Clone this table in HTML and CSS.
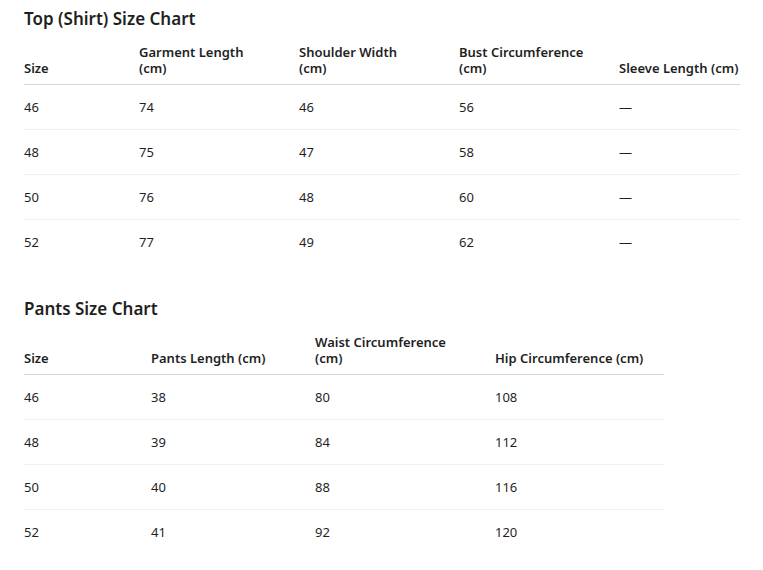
FILE: index.html
```html
<!DOCTYPE html>
<html>
<head>
<meta charset="utf-8">
<link rel="stylesheet" href="styles.css">
</head>
<body>
<div class="page">
  <section class="chart">
    <h2 class="title">Top (Shirt) Size Chart</h2>
    <table class="tbl tbl-top">
      <colgroup>
        <col class="c-size"><col class="c-a"><col class="c-b"><col class="c-c"><col class="c-d">
      </colgroup>
      <thead>
        <tr><th>Size</th><th>Garment Length<br>(cm)</th><th>Shoulder Width<br>(cm)</th><th>Bust Circumference<br>(cm)</th><th>Sleeve Length (cm)</th></tr>
      </thead>
      <tbody>
        <tr><td>46</td><td>74</td><td>46</td><td>56</td><td>—</td></tr>
        <tr><td>48</td><td>75</td><td>47</td><td>58</td><td>—</td></tr>
        <tr><td>50</td><td>76</td><td>48</td><td>60</td><td>—</td></tr>
        <tr><td>52</td><td>77</td><td>49</td><td>62</td><td>—</td></tr>
      </tbody>
    </table>
  </section>
  <section class="chart">
    <h2 class="title">Pants Size Chart</h2>
    <table class="tbl tbl-pants">
      <colgroup>
        <col class="p-size"><col class="p-a"><col class="p-b"><col class="p-c">
      </colgroup>
      <thead>
        <tr><th>Size</th><th>Pants Length (cm)</th><th>Waist Circumference<br>(cm)</th><th>Hip Circumference (cm)</th></tr>
      </thead>
      <tbody>
        <tr><td>46</td><td>38</td><td>80</td><td>108</td></tr>
        <tr><td>48</td><td>39</td><td>84</td><td>112</td></tr>
        <tr><td>50</td><td>40</td><td>88</td><td>116</td></tr>
        <tr><td>52</td><td>41</td><td>92</td><td>120</td></tr>
      </tbody>
    </table>
  </section>
</div>
</body>
</html>
```

FILE: styles.css
```css
html, body {
  margin: 0;
  padding: 0;
  background: #ffffff;
}
body {
  font-family: "Segoe UI", "Noto Sans", "Open Sans", sans-serif;
  color: #1f1f1f;
  font-size: 13px;
}
.page {
  padding: 7px 23px 0 24px;
}
.chart {
  height: 290px;
}
.title {
  margin: 0;
  font-size: 17px;
  font-weight: 600;
  line-height: 24px;
  color: #1f1f1f;
}
.tbl {
  border-collapse: collapse;
  table-layout: fixed;
  margin-top: 13px;
}
.tbl-top { width: 716px; }
.tbl-pants { width: 640px; }
.c-size { width: 115px; }
.c-a, .c-b, .c-c { width: 160px; }
.c-d { width: 121px; }
.p-size { width: 127px; }
.p-a { width: 164px; }
.p-b { width: 180px; }
.p-c { width: 169px; }
.tbl th {
  text-align: left;
  font-weight: 600;
  line-height: 16px;
  vertical-align: bottom;
  padding: 0 0 8px 0;
  border-bottom: 1px solid #d6d6d6;
  white-space: nowrap;
}
.tbl td {
  height: 44px;
  padding: 0;
  line-height: 18px;
  vertical-align: middle;
  border-bottom: 1px solid #efefef;
}
.tbl tbody tr:last-child td {
  border-bottom: none;
}
```
